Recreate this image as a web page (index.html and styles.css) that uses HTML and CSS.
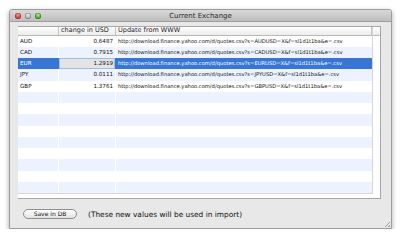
FILE: index.html
```html
<!DOCTYPE html>
<html lang="en">
<head>
    <meta charset="UTF-8">
    <title>Current Exchange</title>
    <link rel="stylesheet" href="styles.css">
</head>
<body>
    <div class="window">
        <div class="titlebar">
            <div class="lights">
                <span class="light light-close"></span>
                <span class="light light-min"></span>
                <span class="light light-zoom"></span>
            </div>
            <div class="title">Current Exchange</div>
            <div></div>
        </div>

        <div class="content">
            <div class="scroll-view">
                <div class="table">
                    <div class="row row-header">
                        <div class="cell"></div>
                        <div class="cell">change in USD</div>
                        <div class="cell">Update from WWW</div>
                    </div>
                    <div class="row">
                        <div class="cell">AUD</div>
                        <div class="cell cell-num">0.6487</div>
                        <div class="cell cell-url">http://download.finance.yahoo.com/d/quotes.csv?s=AUDUSD=X&amp;f=sl1d1t1ba&amp;e=.csv</div>
                    </div>
                    <div class="row">
                        <div class="cell">CAD</div>
                        <div class="cell cell-num">0.7915</div>
                        <div class="cell cell-url">http://download.finance.yahoo.com/d/quotes.csv?s=CADUSD=X&amp;f=sl1d1t1ba&amp;e=.csv</div>
                    </div>
                    <div class="row selected">
                        <div class="cell">EUR</div>
                        <div class="cell cell-num cell-edit">1.2919</div>
                        <div class="cell cell-url">http://download.finance.yahoo.com/d/quotes.csv?s=EURUSD=X&amp;f=sl1d1t1ba&amp;e=.csv</div>
                    </div>
                    <div class="row">
                        <div class="cell">JPY</div>
                        <div class="cell cell-num">0.0111</div>
                        <div class="cell cell-url">http://download.finance.yahoo.com/d/quotes.csv?s=JPYUSD=X&amp;f=sl1d1t1ba&amp;e=.csv</div>
                    </div>
                    <div class="row">
                        <div class="cell">GBP</div>
                        <div class="cell cell-num">1.3761</div>
                        <div class="cell cell-url">http://download.finance.yahoo.com/d/quotes.csv?s=GBPUSD=X&amp;f=sl1d1t1ba&amp;e=.csv</div>
                    </div>
                    <div class="row"><div class="cell"></div><div class="cell"></div><div class="cell"></div></div>
                    <div class="row"><div class="cell"></div><div class="cell"></div><div class="cell"></div></div>
                    <div class="row"><div class="cell"></div><div class="cell"></div><div class="cell"></div></div>
                    <div class="row"><div class="cell"></div><div class="cell"></div><div class="cell"></div></div>
                    <div class="row"><div class="cell"></div><div class="cell"></div><div class="cell"></div></div>
                    <div class="row"><div class="cell"></div><div class="cell"></div><div class="cell"></div></div>
                    <div class="row"><div class="cell"></div><div class="cell"></div><div class="cell"></div></div>
                    <div class="row"><div class="cell"></div><div class="cell"></div><div class="cell"></div></div>
                    <div class="row"><div class="cell"></div><div class="cell"></div><div class="cell"></div></div>
                </div>
                <div class="corner">
                    <div class="corner-header"></div>
                </div>
            </div>

            <div class="footer">
                <button class="button">Save in DB</button>
                <span class="note">(These new values will be used in import)</span>
            </div>
        </div>

        <div class="grip"></div>
    </div>
</body>
</html>
```

FILE: styles.css
```css
body {
    margin: 0;
    padding: 0;
    background-color: #ffffff;
    font-family: 'DejaVu Sans', 'Lucida Grande', sans-serif;
    color: #111;
}

.window {
    position: relative;
    margin: 9px 0 0 9px;
    width: 381px;
    height: 218px;
    border: 1px solid #9c9c9c;
    border-radius: 3px 3px 0 0;
    background-color: #e8e8e8;
    box-shadow: 0 2px 5px rgba(0, 0, 0, 0.35);
    display: flex;
    flex-direction: column;
}

.titlebar {
    height: 11px;
    display: grid;
    grid-template-columns: 1fr auto 1fr;
    align-items: center;
    background: linear-gradient(#d9d9d9, #bdbdbd);
    border-bottom: 1px solid #9e9e9e;
    border-radius: 3px 3px 0 0;
}

.lights {
    display: flex;
    gap: 4px;
    padding-left: 5px;
}

.light {
    width: 6px;
    height: 6px;
    border-radius: 50%;
    box-shadow: inset 0 0 0 0.5px rgba(0, 0, 0, 0.35);
}

.light-close {
    background: radial-gradient(circle at 50% 30%, #ff9a8a, #d42a1c 70%);
}

.light-min {
    background: radial-gradient(circle at 50% 30%, #eeeeee, #a8a8a8 70%);
}

.light-zoom {
    background: radial-gradient(circle at 50% 30%, #b6f08a, #3c9a1c 70%);
}

.title {
    font-size: 7px;
    color: #2a2a2a;
}

.content {
    flex: 1;
    padding: 4px 10px 0 8px;
    display: flex;
    flex-direction: column;
}

.scroll-view {
    display: flex;
    height: 171px;
    border: 1px solid #a8a8a8;
    border-left: none;
    background-color: #ffffff;
}

.table {
    width: 354px;
    height: 166px;
    overflow: hidden;
    border-right: 1px solid #d6d6d6;
    border-bottom: 1px solid #d6d6d6;
}

.row {
    display: grid;
    grid-template-columns: 41px 57px 1fr;
    height: 11.25px;
}

.row:nth-child(odd) {
    background-color: #edf3fe;
}

.cell {
    border-right: 1px solid #ffffff;
    font-size: 5.6px;
    line-height: 11.25px;
    padding: 0 2px;
    white-space: nowrap;
    overflow: hidden;
}

.cell:last-child {
    border-right: none;
}

.cell-num {
    text-align: right;
}

.cell-url {
    font-size: 5.2px;
}

.row-header {
    height: 8.5px;
    background: linear-gradient(#ffffff, #ececec);
    border-bottom: 1px solid #b8b8b8;
    box-sizing: border-box;
}

.row-header .cell {
    border-right: 1px solid #c4c4c4;
    font-size: 6.5px;
    line-height: 7.5px;
    color: #222;
}

.row.selected {
    background-color: #3875d7;
    color: #ffffff;
}

.row.selected .cell {
    border-right-color: #3875d7;
}

.row.selected .cell-edit {
    background-color: #e4e4e4;
    color: #111;
    box-shadow: inset 0 0 0 1px #9fbce6;
}

.corner {
    flex: 1;
}

.corner-header {
    height: 8.5px;
    box-sizing: border-box;
    background: linear-gradient(#ffffff, #ececec);
    border-bottom: 1px solid #b8b8b8;
}

.footer {
    display: flex;
    align-items: center;
    gap: 11px;
    margin-top: 10px;
    padding-left: 5px;
}

.button {
    width: 54px;
    height: 10px;
    padding: 0;
    border: 1px solid #8e8e8e;
    border-radius: 6px;
    background: linear-gradient(#ffffff, #e2e2e2);
    font-family: 'DejaVu Sans', 'Lucida Grande', sans-serif;
    font-size: 6px;
    line-height: 8px;
    color: #111;
}

.note {
    font-size: 7.4px;
    color: #111;
}

.grip {
    position: absolute;
    right: 1px;
    bottom: 1px;
    width: 7px;
    height: 7px;
    background: repeating-linear-gradient(135deg, transparent 0 1.5px, #a0a0a0 1.5px 2.3px);
    clip-path: polygon(100% 0, 100% 100%, 0 100%);
}
```
